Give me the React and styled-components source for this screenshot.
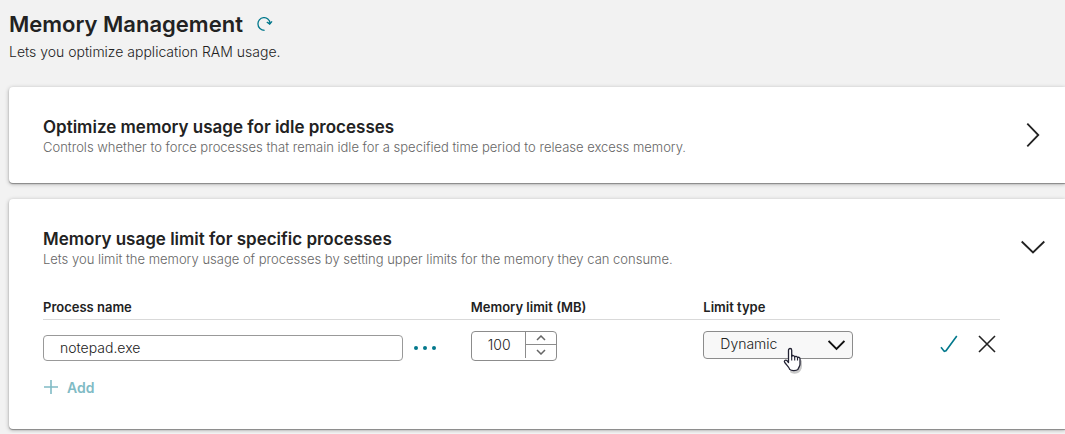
import React, {useState} from 'react';
import styled, { createGlobalStyle } from 'styled-components';

const GlobalStyle = createGlobalStyle`
  * {
    box-sizing: border-box;
  }
  body {
    margin: 0;
    background: #f2f2f2;
    color: #222;
    font-family: Inter, "Open Sans", sans-serif;
    font-size: 14px;
    font-weight: 300;
  }
  button, input, select {
    font: inherit;
    color: inherit;
  }
`;

const Page = styled.main`
  padding: 8px 0 4px 9px;
`;

const PageHeader = styled.header`
  padding-bottom: 24px;
`;

const TitleRow = styled.div`
  display: flex;
  align-items: center;
  gap: 14px;
`;

const Title = styled.h1`
  margin: 0;
  font-size: 22px;
  line-height: 32px;
  font-weight: 600;
`;

const Subtitle = styled.p`
  margin: 0;
  font-size: 14px;
  line-height: 23px;
`;

const IconButton = styled.button`
  display: flex;
  flex: none;
  padding: 0;
  border: 0;
  background: none;
  color: ${props => props.$accent ? '#02788c' : '#222'};
  cursor: pointer;
`;

const Card = styled.section`
  background: #fff;
  border-radius: 4px 0 0 4px;
  box-shadow: 0 1px 1px #888, 0 1px 4px rgba(0, 0, 0, 0.3);
  padding: 26px 20px 26px 34px;

  & + & {
    margin-top: 16px;
  }
`;

const CardHeader = styled.div`
  display: flex;
  align-items: center;
  justify-content: space-between;
  height: 44px;
`;

const CardTitle = styled.h2`
  margin: 0;
  font-size: 17px;
  line-height: 24px;
  font-weight: 600;
`;

const CardText = styled.p`
  margin: 0;
  font-size: 13px;
  line-height: 16px;
  color: #666;
`;

const CardBody = styled.div`
  padding: 26px 45px 2px 0;
`;

const Table = styled.table`
  width: 100%;
  table-layout: fixed;
  border-collapse: collapse;
`;

const HeadCell = styled.th`
  width: ${props => props.$width};
  height: 24px;
  padding: 0;
  border-bottom: 1px solid #d9d9d9;
  font-size: 13px;
  font-weight: 600;
  line-height: 22px;
  text-align: left;
`;

const Cell = styled.td`
  height: 54px;
  padding: 11px 0 0;
  vertical-align: top;
`;

const Field = styled.div`
  display: flex;
  align-items: center;
  gap: 11px;
  padding-top: 4px;
`;

const ProcessInput = styled.input`
  width: 360px;
  height: 26px;
  padding: 0 16px;
  border: 1px solid #999;
  border-radius: 4px;
  background: #fff;
`;

const Spinner = styled.div`
  display: grid;
  grid-template-columns: 1fr 30px;
  width: 86px;
  height: 30px;
  border: 1px solid #8c8c8c;
  border-radius: 4px;
`;

const SpinnerInput = styled.input`
  width: 100%;
  min-width: 0;
  height: 26px;
  padding: 0 0 0 16px;
  border: 0;
  border-right: 1px solid #8c8c8c;
  background: none;
  appearance: textfield;

  &::-webkit-inner-spin-button {
    appearance: none;
  }
`;

const Steps = styled.div`
  display: grid;
  grid-template-rows: 12px 15px;
`;

const Step = styled.button`
  display: flex;
  align-items: center;
  justify-content: center;
  padding: 0;
  border: 0;
  background: none;
  color: #666;

  & + & {
    border-top: 1px solid #8c8c8c;
  }
`;

const SelectBox = styled.div`
  position: relative;
  width: 150px;
`;

const Select = styled.select`
  display: block;
  width: 100%;
  height: 28px;
  padding: 0 36px 2px 16px;
  border: 1px solid #8c8c8c;
  border-radius: 4px;
  background: #f8f8f8;
  appearance: none;
`;

const SelectArrow = styled.svg`
  position: absolute;
  top: 9px;
  right: 8px;
  pointer-events: none;
`;

const Pointer = styled.svg`
  position: absolute;
  top: 16px;
  left: 78px;
  pointer-events: none;
`;

const Actions = styled.div`
  display: flex;
  justify-content: flex-end;
  gap: 20px;
  padding: 4px 4px 0 0;
`;

const AddButton = styled.button`
  display: flex;
  align-items: center;
  gap: 8px;
  height: 28px;
  padding: 0;
  border: 0;
  background: none;
  color: #80bbc5;
  font-weight: 600;
`;

function RefreshIcon() {
  return (
    <svg width="16" height="14" viewBox="0 0 16 14" fill="none" stroke="currentColor">
      <path d="M7.6 13.3C3.9 13.3 1 10.6 1 7.2a6 6 0 0 1 12-1.1" strokeWidth="1.3" />
      <path d="M9.8 5 12.7 7.2 15 4.4" strokeWidth="1.3" />
      <path d="M10.4 5.4h4.2l-1.8 2z" fill="currentColor" stroke="none" />
    </svg>
  );
}

function Chevron({down}) {
  return (
    <svg width="24" height="24" viewBox="0 0 24 24" fill="none" stroke="currentColor" strokeWidth="1.8">
      {down ? <path d="m.7 6.5 11.3 11 11.3-11" /> : <path d="m6.3.7 11 11.3-11 11.3" />}
    </svg>
  );
}

function StepArrow({up}) {
  return (
    <svg width="10" height="6" viewBox="0 0 10 6" fill="none" stroke="currentColor" strokeWidth="1.5">
      <path d={up ? 'm1 5 4-4 4 4' : 'm1 1 4 4 4-4'} />
    </svg>
  );
}

function App() {
  const [process, setProcess] = useState('notepad.exe');
  const [limit, setLimit] = useState(100);
  const [type, setType] = useState('Dynamic');

  return (
    <>
      <GlobalStyle />
      <Page>
        <PageHeader>
          <TitleRow>
            <Title>Memory Management</Title>
            <IconButton $accent aria-label="Refresh"><RefreshIcon /></IconButton>
          </TitleRow>
          <Subtitle>Lets you optimize application RAM usage.</Subtitle>
        </PageHeader>

        <Card>
          <CardHeader>
            <div>
              <CardTitle>Optimize memory usage for idle processes</CardTitle>
              <CardText>Controls whether to force processes that remain idle for a specified time period to release excess memory.</CardText>
            </div>
            <IconButton aria-label="Expand"><Chevron /></IconButton>
          </CardHeader>
        </Card>

        <Card>
          <CardHeader>
            <div>
              <CardTitle>Memory usage limit for specific processes</CardTitle>
              <CardText>Lets you limit the memory usage of processes by setting upper limits for the memory they can consume.</CardText>
            </div>
            <IconButton aria-label="Collapse"><Chevron down /></IconButton>
          </CardHeader>
          <CardBody>
            <Table>
              <thead>
                <tr>
                  <HeadCell $width="44.7%" id="process">Process name</HeadCell>
                  <HeadCell $width="24.3%" id="limit">Memory limit (MB)</HeadCell>
                  <HeadCell $width="16%" id="type">Limit type</HeadCell>
                  <HeadCell $width="15%" />
                </tr>
              </thead>
              <tbody>
                <tr>
                  <Cell>
                    <Field>
                      <ProcessInput aria-labelledby="process" value={process} onChange={e => setProcess(e.target.value)} />
                      <IconButton $accent aria-label="Browse">
                        <svg width="22" height="4" viewBox="0 0 22 4" fill="currentColor">
                          <circle cx="2" cy="2" r="2" />
                          <circle cx="11" cy="2" r="2" />
                          <circle cx="20" cy="2" r="2" />
                        </svg>
                      </IconButton>
                    </Field>
                  </Cell>
                  <Cell>
                    <Spinner>
                      <SpinnerInput type="number" aria-labelledby="limit" value={limit} onChange={e => setLimit(Number(e.target.value))} />
                      <Steps>
                        <Step aria-label="Increase" onClick={() => setLimit(limit + 1)}><StepArrow up /></Step>
                        <Step aria-label="Decrease" onClick={() => setLimit(limit - 1)}><StepArrow /></Step>
                      </Steps>
                    </Spinner>
                  </Cell>
                  <Cell>
                    <SelectBox>
                      <Select aria-labelledby="type" value={type} onChange={e => setType(e.target.value)}>
                        <option>Dynamic</option>
                      </Select>
                      <SelectArrow width="17" height="11" viewBox="0 0 17 11" fill="none" stroke="#111" strokeWidth="1.8">
                        <path d="m.6 1 7.9 8 7.9-8" />
                      </SelectArrow>
                      <Pointer width="26" height="28" viewBox="0 0 26 28">
                        <path d="M14 11c3 0 6 1 7 3v5c0 3-2 6-4 7-3 1-6 1-8-1z" fill="#888" opacity=".45" />
                        <path d="M7.5 15.5V3.2c0-2.3 3.2-2.3 3.2 0v6.1c.2-1.2 3-1 3 .7.5-1.1 2.7-.8 2.8.8.7-1 2.5-.5 2.5 1.2v5.2c0 2.2-1.6 3.4-2 5.2-1.5 1.7-6.8 1.7-8.3 0-.6-2.5-3.4-4.5-5-7-1.1-1.7.8-3 2.2-1.8z" fill="#fff" stroke="#223" strokeWidth="1.3" strokeLinejoin="round" />
                        <path d="M10.7 8.5v5M13.7 10v3.5M16.5 11v2.5" stroke="#223" strokeWidth="1.1" />
                      </Pointer>
                    </SelectBox>
                  </Cell>
                  <Cell>
                    <Actions>
                      <IconButton $accent aria-label="Save">
                        <svg width="18" height="18" viewBox="0 0 18 18" fill="none" stroke="currentColor" strokeWidth="1.6">
                          <path d="M1 12.2 4.3 16.4 6 15.8 16.8 1" />
                        </svg>
                      </IconButton>
                      <IconButton aria-label="Cancel">
                        <svg width="18" height="18" viewBox="0 0 18 18" fill="none" stroke="currentColor" strokeWidth="1.6">
                          <path d="m1 1 16 16M17 1 1 17" />
                        </svg>
                      </IconButton>
                    </Actions>
                  </Cell>
                </tr>
              </tbody>
            </Table>
            <AddButton>
              <svg width="16" height="16" viewBox="0 0 16 16" fill="none" stroke="currentColor" strokeWidth="1.6">
                <path d="M8 1v14M1 8h14" />
              </svg>
              Add
            </AddButton>
          </CardBody>
        </Card>
      </Page>
    </>
  );
}

export default App;
